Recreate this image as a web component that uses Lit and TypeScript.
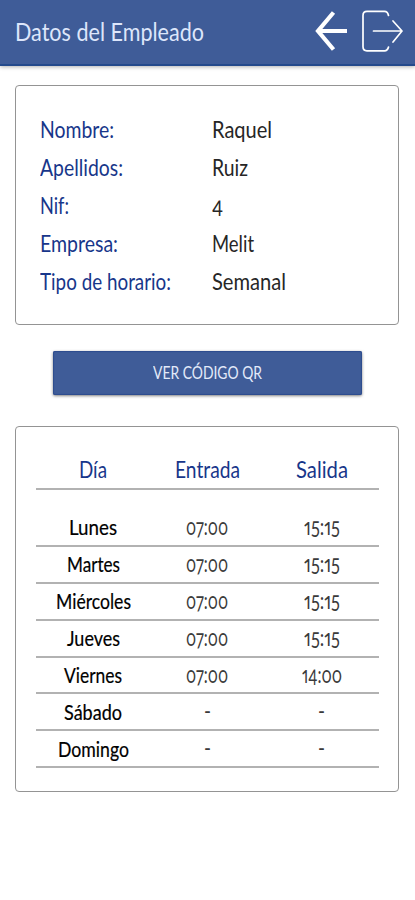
import { LitElement, html, css } from "lit";
import { customElement, property } from "lit/decorators.js";

/** Single line of text condensed or widened horizontally to a given width. */
@customElement("fit-text")
class FitText extends LitElement {
  @property({ type: Number }) width = 0;
  @property() text = "";

  static styles = css`
    :host { display: block; white-space: nowrap; }
    .line { display: inline-block; transform-origin: 0 50%; }
  `;

  updated() {
    const line = this.renderRoot.querySelector(".line") as HTMLElement;
    this.style.width = this.width + "px";
    line.style.transform = "none";
    const natural = line.getBoundingClientRect().width;
    if (natural > 0) line.style.transform = `scaleX(${this.width / natural})`;
  }

  render() {
    return html`<span class="line">${this.text}</span>`;
  }
}

type Cell = [string, number];

const employee: [Cell, Cell][] = [
  [["Nombre:", 74], ["Raquel", 60]],
  [["Apellidos:", 83], ["Ruiz", 36]],
  [["Nif:", 29], ["4", 11]],
  [["Empresa:", 78], ["Melit", 42]],
  [["Tipo de horario:", 131], ["Semanal", 74]],
];

const schedule: [Cell, Cell, Cell][] = [
  [["Lunes", 48], ["07:00", 42], ["15:15", 36]],
  [["Martes", 53], ["07:00", 42], ["15:15", 36]],
  [["Miércoles", 75], ["07:00", 42], ["15:15", 36]],
  [["Jueves", 53], ["07:00", 42], ["15:15", 36]],
  [["Viernes", 58], ["07:00", 42], ["14:00", 40]],
  [["Sábado", 58], ["-", 7], ["-", 7]],
  [["Domingo", 71], ["-", 7], ["-", 7]],
];

const fit = ([text, width]: Cell) => html`<fit-text .text=${text} .width=${width}></fit-text>`;

@customElement("app-root")
class AppRoot extends LitElement {
  static styles = css`
    :host {
      display: block;
      box-sizing: border-box;
      width: 415px;
      height: 900px;
      overflow: hidden;
      background: #fff;
      color: #262626;
      font-family: Lato, "Open Sans", sans-serif;
      font-variant-numeric: oldstyle-nums proportional-nums;
    }
    .bar {
      display: flex;
      align-items: center;
      box-sizing: border-box;
      height: 66px;
      padding: 0 11px 3px 15px;
      background: #3f5c98;
      border-bottom: 2px solid #244a8c;
      box-shadow: 0 1px 4px rgba(0, 0, 0, 0.3);
      color: #dde6fb;
      font-size: 25px;
    }
    .icons { display: flex; margin-left: auto; gap: 13px; }
    svg { display: block; fill: none; stroke: #fff; }
    .back { stroke-width: 4.2; }
    .exit { stroke-width: 1.7; stroke-linecap: round; stroke-linejoin: round; }
    .card {
      box-sizing: border-box;
      width: 384px;
      margin-left: 15px;
      border: 1.5px solid #949494;
      border-radius: 4px;
    }
    .info { height: 240px; margin-top: 19px; padding: 24px 24px 0; font-size: 22.5px; }
    .pair {
      display: grid;
      grid-template-columns: 172px 1fr;
      align-items: center;
      height: 38px;
    }
    .label, .head { color: #17368a; }
    .button {
      display: flex;
      align-items: center;
      justify-content: center;
      width: 309px;
      height: 44px;
      margin: 26px 0 31px 53px;
      padding: 0 0 1px;
      border: 0;
      border-radius: 2px;
      background: #3f5c98;
      box-shadow: 0 1px 3px rgba(0, 0, 0, 0.5), inset 0 0 1px 1px #2d4c8e;
      color: #e3eafa;
      font: inherit;
      font-size: 17.5px;
    }
    .hours { height: 366px; padding: 24px 19px 0 20px; font-size: 21px; line-height: 25px; }
    .row {
      display: grid;
      grid-template-columns: 1fr 1fr 1fr;
      align-items: center;
      justify-items: center;
      box-sizing: border-box;
      height: 36.9px;
      border-bottom: 2px solid #b2b2b2;
    }
    .head { height: 39px; margin-bottom: 20px; font-size: 22.5px; }
    .day { padding-bottom: 1px; color: #000; -webkit-text-stroke: 0.2px #000; }
    .time { padding-bottom: 2px; color: #3a3a3a; font-size: 22.5px; }
  `;

  render() {
    return html`
      <header class="bar">
        ${fit(["Datos del Empleado", 189])}
        <div class="icons">
          <svg class="back" width="33" height="42" viewBox="0 0 33 42">
            <path d="M18.5 2.5 L3 21 L18.5 39.5 M3 21 H32" />
          </svg>
          <svg class="exit" width="43" height="42" viewBox="0 0 43 42">
            <path d="M27.5 5.5 C27 3 25.5 1.4 23.5 1.4 H6 Q2 1.4 2 5.4 V36.8 Q2 40.8 6 40.8 H23.5 C25.5 40.8 27 39.2 27.5 37 M12.5 21 H41 M32 11 L41 21 L32 32" />
          </svg>
        </div>
      </header>
      <section class="card info">
        ${employee.map(([label, value]) => html`
          <div class="pair">
            <div class="label">${fit(label)}</div>
            <div>${fit(value)}</div>
          </div>`)}
      </section>
      <button class="button">${fit(["VER CÓDIGO QR", 109])}</button>
      <section class="card hours">
        <div class="row head">
          ${fit(["Día", 28])}${fit(["Entrada", 65])}${fit(["Salida", 52])}
        </div>
        ${schedule.map(([day, start, end]) => html`
          <div class="row">
            <div class="day">${fit(day)}</div>
            <div class="time">${fit(start)}</div>
            <div class="time">${fit(end)}</div>
          </div>`)}
      </section>
    `;
  }
}
